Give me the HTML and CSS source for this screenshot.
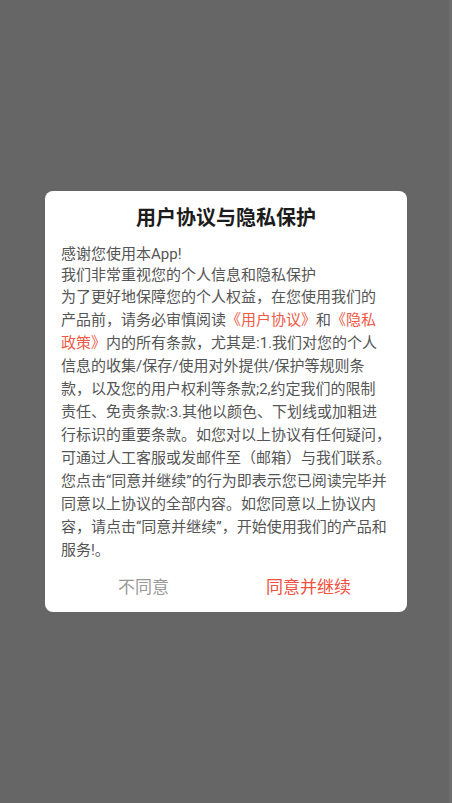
FILE: index.html
```html
<!DOCTYPE html>
<html lang="zh-CN">
<head>
<meta charset="utf-8">
<title>用户协议与隐私保护</title>
<link rel="stylesheet" href="styles.css">
</head>
<body>
<div class="overlay">
  <div class="dialog">
    <h1 class="title">用户协议与隐私保护</h1>
    <div class="intro">感谢您使用本App!<br>我们非常重视您的个人信息和隐私保护</div>
    <div class="content">为了更好地保障您的个人权益，在您使用我们的<br>产品前，请务必审慎阅读<span class="link">《用户协议》</span>和<span class="link">《隐私<br>政策》</span>内的所有条款，尤其是:1.我们对您的个人<br>信息的收集/保存/使用对外提供/保护等规则条<br>款，以及您的用户权利等条款;2,约定我们的限制<br>责任、免责条款:3.其他以颜色、下划线或加粗进<br>行标识的重要条款。如您对以上协议有任何疑问，<br>可通过人工客服或发邮件至（邮箱）与我们联系。<br>您点击“同意并继续”的行为即表示您已阅读完毕并<br>同意以上协议的全部内容。如您同意以上协议内<br>容，请点击“同意并继续”，开始使用我们的产品和<br>服务!。</div>
    <div class="actions">
      <button class="btn btn-cancel">不同意</button>
      <button class="btn btn-ok">同意并继续</button>
    </div>
  </div>
</div>
</body>
</html>
```
FILE: styles.css
```css
html, body {
  margin: 0;
  padding: 0;
  height: 100%;
}
body {
  background: linear-gradient(to right, #666666 0, #666666 449px, #6d6d6d 449px, #6d6d6d 100%);
  font-family: Roboto, "Noto Sans CJK SC", sans-serif;
}
.overlay {
  height: 100vh;
  display: flex;
  align-items: center;
  justify-content: center;
}
.dialog {
  width: 362px;
  box-sizing: border-box;
  background: #ffffff;
  border-radius: 8px;
  padding: 13px 16px 4px;
}
.title {
  margin: 0 0 12px;
  font-size: 20px;
  line-height: 28px;
  font-weight: 700;
  color: #1c1c1c;
  text-align: center;
}
.intro {
  font-size: 15px;
  line-height: 21px;
  color: #555555;
  white-space: nowrap;
}
.content {
  font-size: 15px;
  line-height: 23px;
  color: #555555;
  white-space: nowrap;
}
.link {
  color: #ef5a47;
}
.actions {
  display: flex;
  height: 46px;
}
.btn {
  flex: 1;
  border: 0;
  background: transparent;
  font-family: Roboto, "Noto Sans CJK SC", sans-serif;
  font-size: 17px;
  padding: 0;
  cursor: pointer;
}
.btn-cancel {
  color: #999999;
}
.btn-ok {
  color: #f0503e;
}
```
